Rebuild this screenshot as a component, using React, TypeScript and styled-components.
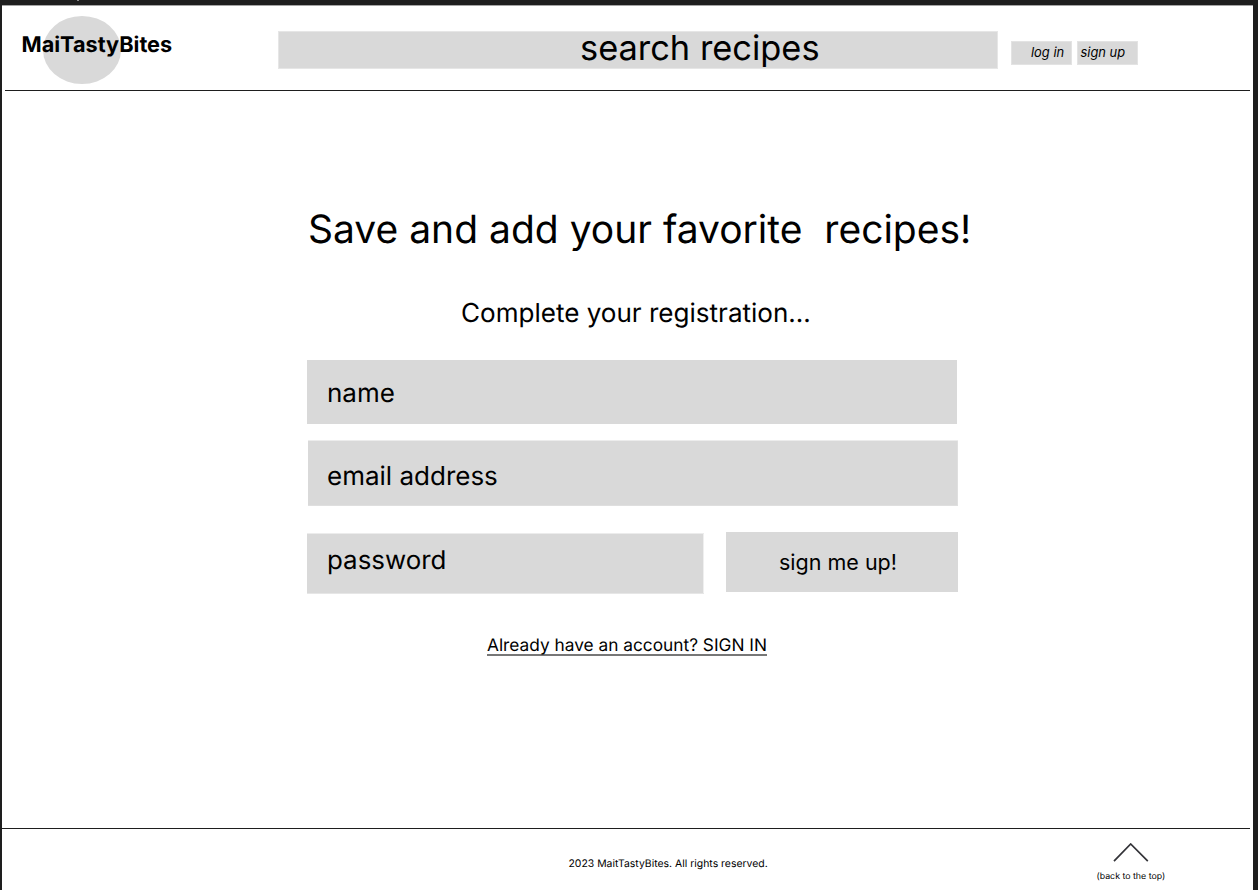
import React from "react";
import styled, { createGlobalStyle } from "styled-components";

const GlobalStyle = createGlobalStyle`
  * { box-sizing: border-box; }
  body { margin: 0; background: #1e1e1e; overflow: hidden; }
  button { border: 0; padding: 0; font: inherit; color: inherit; text-align: left; }
`;

const Frame = styled.div`
  position: relative;
  width: 1258px;
  height: 890px;
  padding: 5px 5px 0 2px;
  background: #1e1e1e;
  font-family: Inter, "Liberation Sans", sans-serif;
  text-rendering: geometricPrecision;
  color: #000;
`;

const TopMark = styled.span`
  position: absolute;
  left: 77px;
  top: 0;
  width: 2px;
  height: 1px;
  background: #8a8a8a;
`;

const Page = styled.div`
  display: flex;
  flex-direction: column;
  height: 885px;
  background: #fff;
  box-shadow: inset 0 1px 0 #a5a5a5;
`;

const Header = styled.header`
  display: flex;
  align-items: flex-start;
  height: 86px;
  margin: 0 3px;
  border-bottom: 1px solid #1e1e1e;
`;

const Logo = styled.div`
  position: relative;
  width: 273px;
  padding: 26px 0 0 16.5px;
`;

const LogoDisc = styled.span`
  position: absolute;
  left: 38px;
  top: 11px;
  width: 78px;
  height: 68px;
  border-radius: 50%;
  background: #d9d9d9;
`;

const Label = styled.span<{ $size: number; $line: number }>`
  display: block;
  font-size: ${(p) => p.$size}px;
  line-height: ${(p) => p.$line}px;
  white-space: pre;
`;

const LogoText = styled(Label)`
  position: relative;
  font-weight: 700;
`;

const SearchBar = styled.div`
  width: 720px;
  height: 38px;
  margin-top: 26px;
  padding: 0 0 0 301px;
  background: #d9d9d9;
  border: 1px solid #e6e6e6;
`;

const AuthButton = styled.button<{ $gap: number; $inset: number }>`
  display: flex;
  align-items: flex-start;
  width: 61px;
  height: 24px;
  margin: 36px 0 0 ${(p) => p.$gap}px;
  padding: 0 0 0 ${(p) => p.$inset}px;
  background: #d9d9d9;
  box-shadow: inset 0 0 0 1px #e3e3e3;
  font-style: italic;
`;

const Main = styled.main`
  height: 737px;
`;

const Title = styled.h1`
  margin: 0;
  padding: 114px 0 0 306px;
  font-weight: 400;
`;

const Subtitle = styled.h2`
  margin: 0;
  padding: 36px 0 0 459px;
  font-weight: 400;
`;

const Form = styled.form`
  margin: 23px 0 0 305px;
  width: 651px;
`;

const Field = styled.div<{ $w: number; $h: number; $top: number; $indent?: number }>`
  width: ${(p) => p.$w}px;
  height: ${(p) => p.$h}px;
  margin-left: ${(p) => p.$indent ?? 0}px;
  padding: ${(p) => p.$top}px 0 0 ${(p) => 20 - (p.$indent ?? 0)}px;
  background: #d9d9d9;
`;

const EmailField = styled(Field)`
  margin-top: 16px;
  box-shadow: inset 0 1px 0 #ececec, inset 0 -1px 0 #dfdfdf, inset -1px 0 0 #dfdfdf;
`;

const PasswordRow = styled.div`
  display: flex;
  align-items: flex-start;
  justify-content: space-between;
  margin-top: 26px;
`;

const PasswordField = styled(Field)`
  margin-top: 1px;
  box-shadow: inset 0 1px 0 #ececec, inset 0 -1px 0 #e6e6e6, inset -1px 0 0 #efefef;
`;

const SubmitButton = styled.button`
  width: 232px;
  height: 60px;
  padding-left: 53px;
  background: #d9d9d9;
`;

const SignInLink = styled.a`
  display: block;
  width: 280px;
  height: 22px;
  margin: 40px 0 0 485px;
  color: #000;
  border-bottom: 2px solid #777;
`;

const Footer = styled.footer`
  display: flex;
  align-items: flex-start;
  height: 62px;
  margin-right: 3px;
  border-top: 1px solid #1e1e1e;
`;

const Copyright = styled.div`
  width: 528px;
  margin: 27px 0 0 566.5px;
`;

const BackToTop = styled.div`
  padding-top: 14px;
`;

const Chevron = styled.svg`
  display: block;
  margin: 0 0 6px 16px;
`;

export default function App() {
  return (
    <>
      <GlobalStyle />
      <Frame>
        <TopMark />
        <Page>
          <Header>
            <Logo>
              <LogoDisc />
              <LogoText $size={21.67} $line={28}>MaiTastyBites</LogoText>
            </Logo>
            <SearchBar>
              <Label $size={34.4} $line={33}>search recipes</Label>
            </SearchBar>
            <AuthButton $gap={13} $inset={20}>
              <Label $size={12.9} $line={23}>log in</Label>
            </AuthButton>
            <AuthButton $gap={5} $inset={3.5}>
              <Label $size={12.9} $line={23}>sign up</Label>
            </AuthButton>
          </Header>
          <Main>
            <Title>
              <Label $size={39} $line={50}>{"Save and add your favorite  recipes!"}</Label>
            </Title>
            <Subtitle>
              <Label $size={26.05} $line={46}>Complete your registration...</Label>
            </Subtitle>
            <Form>
              <Field $w={650} $h={64} $top={18}>
                <Label $size={26} $line={32}>name</Label>
              </Field>
              <EmailField $w={650} $h={66} $top={21} $indent={1}>
                <Label $size={26} $line={32}>email address</Label>
              </EmailField>
              <PasswordRow>
                <PasswordField $w={397} $h={61} $top={12}>
                  <Label $size={25.9} $line={32}>password</Label>
                </PasswordField>
                <SubmitButton type="button">
                  <Label $size={21.5} $line={60}>sign me up!</Label>
                </SubmitButton>
              </PasswordRow>
            </Form>
            <SignInLink>
              <Label $size={17.3} $line={24}>Already have an account? SIGN IN</Label>
            </SignInLink>
          </Main>
          <Footer>
            <Copyright>
              <Label $size={10.43} $line={16}>2023 MaitTastyBites. All rights reserved.</Label>
            </Copyright>
            <BackToTop>
              <Chevron width="36" height="20" viewBox="0 0 36 20" fill="none">
                <path d="M1 18.2 17.7 1 34.8 18.2" stroke="#333338" strokeWidth="1.7" />
              </Chevron>
              <Label $size={8.8} $line={16}>(back to the top)</Label>
            </BackToTop>
          </Footer>
        </Page>
      </Frame>
    </>
  );
}
